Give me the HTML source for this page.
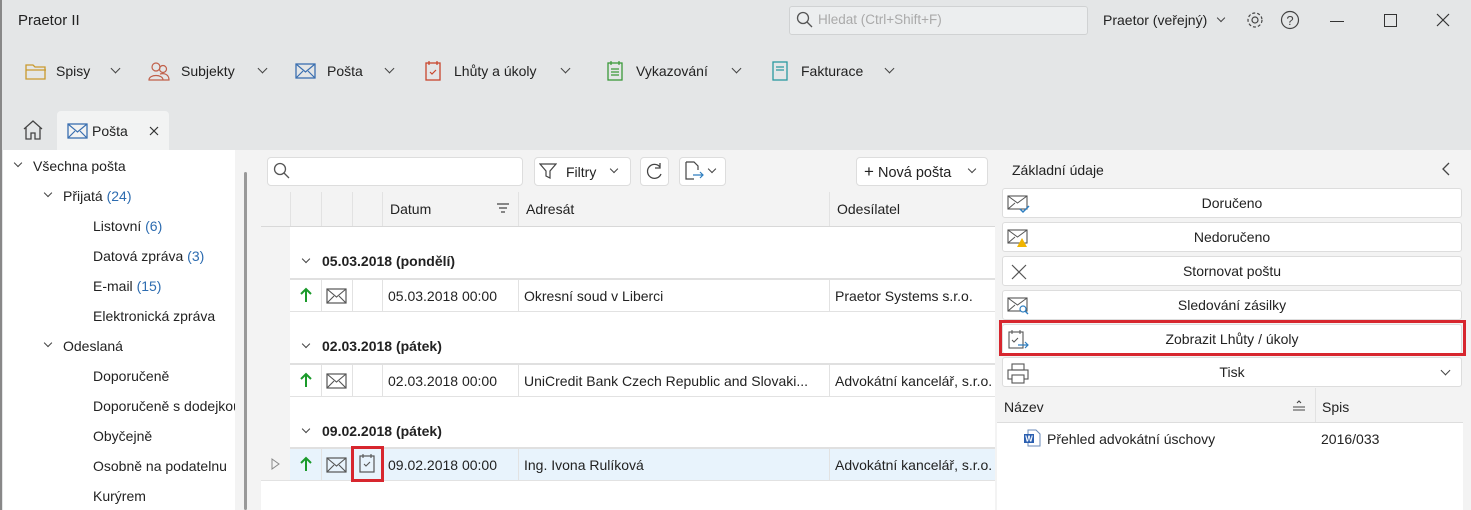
<!DOCTYPE html>
<html><head><meta charset="utf-8"><style>
*{box-sizing:border-box;margin:0;padding:0}
body{width:1471px;height:510px;overflow:hidden;background:#e4e6e7;font-family:"Liberation Sans",sans-serif;font-size:14px;color:#222;position:relative}
.a{position:absolute}
.t{position:absolute;white-space:nowrap}
.chev{display:inline-block;width:7px;height:7px;border-right:1.3px solid #444;border-bottom:1.3px solid #444;transform:rotate(45deg)}
.btn{position:absolute;background:#fff;border:1px solid #ddd;border-radius:4px}
.vl{position:absolute;width:1px;background:#e2e2e2}
.hl{position:absolute;height:1px;background:#e2e2e2}
.rb{position:absolute;left:1002px;width:460px;height:30px;background:#fff;border:1px solid #ddd;border-radius:3px;text-align:center;line-height:28px;font-size:14px}
.rb svg{position:absolute;left:4px;top:5px}
</style></head><body>
<div class="a" style="left:0;top:0;width:2px;height:510px;background:#888"></div>
<div class="t" style="left:18px;top:12px;font-size:15px">Praetor II</div>
<div class="a" style="left:789px;top:6px;width:299px;height:29px;background:#eceeef;border:1px solid #d0d2d3;border-radius:3px"></div>
<svg class="a" style="left:795px;top:11px" width="18" height="18"><circle cx="8" cy="7" r="5.5" fill="none" stroke="#555" stroke-width="1.3"/><path d="M12 11l5 5" stroke="#555" stroke-width="1.3"/></svg>
<div class="t" style="left:818px;top:12px;color:#aaa;font-size:13.5px">Hledat (Ctrl+Shift+F)</div>
<div class="t" style="left:1103px;top:12px;font-size:14px">Praetor (veřejný)</div>
<span class="a chev" style="left:1218px;top:15px;width:6px;height:6px"></span>
<svg class="a" style="left:1245px;top:10px" width="20" height="20"><circle cx="10" cy="10" r="3" fill="none" stroke="#444" stroke-width="1.2"/><circle cx="10" cy="10" r="7" fill="none" stroke="#444" stroke-width="1.2" stroke-dasharray="3 2"/></svg>
<svg class="a" style="left:1280px;top:10px" width="20" height="20"><circle cx="10" cy="10" r="8.5" fill="none" stroke="#444" stroke-width="1.2"/><text x="10" y="15" text-anchor="middle" font-size="13" font-family="Liberation Sans" fill="#444">?</text></svg>
<div class="a" style="left:1330px;top:21px;width:14px;height:1px;background:#333"></div>
<div class="a" style="left:1384px;top:14px;width:13px;height:13px;border:1.2px solid #333"></div>
<svg class="a" style="left:1436px;top:13px" width="14" height="14"><path d="M1 1L13 13M13 1L1 13" stroke="#333" stroke-width="1.2"/></svg>

<!-- toolbar -->
<svg class="a" style="left:25px;top:62px" width="22" height="18"><path d="M1 3h7l2 2h10v12H1z" fill="none" stroke="#c99a2e" stroke-width="1.3"/><path d="M1 8h20" stroke="#c99a2e" stroke-width="1.2"/></svg>
<div class="t" style="left:56px;top:63px">Spisy</div><span class="a chev" style="left:112px;top:65px"></span>
<svg class="a" style="left:148px;top:60px" width="22" height="22"><circle cx="8" cy="7" r="4" fill="none" stroke="#c0604a" stroke-width="1.2"/><circle cx="15" cy="9" r="3.5" fill="none" stroke="#c0604a" stroke-width="1.2"/><path d="M1 20c0-6 14-6 14 0zM12 14c4-1 9 0 9 6h-6" fill="none" stroke="#c0604a" stroke-width="1.2"/></svg>
<div class="t" style="left:181px;top:63px">Subjekty</div><span class="a chev" style="left:259px;top:65px"></span>
<svg class="a" style="left:295px;top:63px" width="22" height="16"><rect x="1" y="1" width="19" height="14" fill="none" stroke="#3a6fb0" stroke-width="1.3"/><path d="M1 1l9.5 8L20 1M1 15l7-7M20 15l-7-7" fill="none" stroke="#3a6fb0" stroke-width="1.2"/></svg>
<div class="t" style="left:327px;top:63px">Pošta</div><span class="a chev" style="left:386px;top:65px"></span>
<svg class="a" style="left:424px;top:60px" width="18" height="22"><rect x="2" y="3" width="14" height="17" fill="none" stroke="#c8452c" stroke-width="1.3"/><path d="M5 1v4M13 1v4M6 12l2 2 4-4" fill="none" stroke="#c8452c" stroke-width="1.2"/></svg>
<div class="t" style="left:454px;top:63px">Lhůty a úkoly</div><span class="a chev" style="left:562px;top:65px"></span>
<svg class="a" style="left:606px;top:60px" width="18" height="22"><rect x="2" y="3" width="14" height="17" fill="none" stroke="#3a9a3a" stroke-width="1.3"/><path d="M5 1v4M13 1v4M5 9h8M5 12h8M5 15h8" stroke="#3a9a3a" stroke-width="1.2"/></svg>
<div class="t" style="left:636px;top:63px">Vykazování</div><span class="a chev" style="left:733px;top:65px"></span>
<svg class="a" style="left:772px;top:61px" width="16" height="20"><rect x="1" y="1" width="14" height="18" fill="none" stroke="#2a9aa0" stroke-width="1.3"/><path d="M4 6h8M4 9h8" stroke="#2a9aa0" stroke-width="1.2"/></svg>
<div class="t" style="left:801px;top:63px">Fakturace</div><span class="a chev" style="left:886px;top:65px"></span>

<!-- tabs -->
<svg class="a" style="left:22px;top:119px" width="22" height="22"><path d="M2 10L11 2l9 8M4 8v12h5v-6h4v6h5V8" fill="none" stroke="#444" stroke-width="1.3"/></svg>
<div class="a" style="left:57px;top:111px;width:112px;height:40px;background:#f2f3f3;border-radius:4px 4px 0 0"></div>
<svg class="a" style="left:67px;top:123px" width="22" height="16"><rect x="1" y="1" width="19" height="14" fill="none" stroke="#3a6fb0" stroke-width="1.3"/><path d="M1 1l9.5 8L20 1M1 15l7-7M20 15l-7-7" fill="none" stroke="#3a6fb0" stroke-width="1.2"/></svg>
<div class="t" style="left:92px;top:123px">Pošta</div>
<svg class="a" style="left:149px;top:126px" width="10" height="10"><path d="M1 1l8 8M9 1L1 9" stroke="#333" stroke-width="1.2"/></svg>

<!-- left tree -->
<div class="a" style="left:3px;top:150px;width:232px;height:360px;background:#fff"></div>
<div class="a" style="left:235px;top:150px;width:26px;height:360px;background:#f3f3f3"></div>
<div class="a" style="left:244px;top:172px;width:3px;height:338px;background:#999;border-radius:2px"></div>
<span class="a chev" style="left:15px;top:160px;width:6px;height:6px"></span><div class="t" style="left:33px;top:158px">Všechna pošta</div>
<span class="a chev" style="left:45px;top:190px;width:6px;height:6px"></span><div class="t" style="left:63px;top:188px">Přijatá <span style="color:#2d6cb0">(24)</span></div>
<div class="t" style="left:93px;top:218px">Listovní <span style="color:#2d6cb0">(6)</span></div>
<div class="t" style="left:93px;top:248px">Datová zpráva <span style="color:#2d6cb0">(3)</span></div>
<div class="t" style="left:93px;top:278px">E-mail <span style="color:#2d6cb0">(15)</span></div>
<div class="t" style="left:93px;top:308px">Elektronická zpráva</div>
<span class="a chev" style="left:45px;top:340px;width:6px;height:6px"></span><div class="t" style="left:63px;top:338px">Odeslaná</div>
<div class="t" style="left:93px;top:368px">Doporučeně</div>
<div class="t" style="left:93px;top:398px;width:142px;overflow:hidden">Doporučeně s dodejkou</div>
<div class="t" style="left:93px;top:428px">Obyčejně</div>
<div class="t" style="left:93px;top:458px;width:142px;overflow:hidden">Osobně na podatelnu</div>
<div class="t" style="left:93px;top:488px">Kurýrem</div>

<!-- middle -->
<div class="a" style="left:261px;top:150px;width:734px;height:360px;background:#f3f3f3"></div>
<div class="btn" style="left:267px;top:157px;width:256px;height:29px"></div>
<svg class="a" style="left:273px;top:162px" width="18" height="18"><circle cx="7" cy="7" r="5.5" fill="none" stroke="#555" stroke-width="1.3"/><path d="M11 11l5 5" stroke="#555" stroke-width="1.3"/></svg>
<div class="btn" style="left:534px;top:157px;width:97px;height:29px"></div>
<svg class="a" style="left:539px;top:162px" width="18" height="18"><path d="M1 2h16l-6 7v7l-4-2V9z" fill="none" stroke="#444" stroke-width="1.2"/></svg>
<div class="t" style="left:566px;top:164px">Filtry</div><span class="a chev" style="left:611px;top:166px;width:6px;height:6px"></span>
<div class="btn" style="left:640px;top:157px;width:29px;height:29px"></div>
<svg class="a" style="left:645px;top:162px" width="19" height="19"><path d="M15 5A7 7 0 1 0 16 12" fill="none" stroke="#444" stroke-width="1.3"/><path d="M15 1v5h-5" fill="none" stroke="#444" stroke-width="1.3"/></svg>
<div class="btn" style="left:679px;top:157px;width:47px;height:29px"></div>
<svg class="a" style="left:684px;top:161px" width="22" height="20"><path d="M2 1h8l4 4v4M2 1v17h8" fill="none" stroke="#444" stroke-width="1.2"/><path d="M9 14h10M16 11l3 3-3 3" fill="none" stroke="#2d7ec0" stroke-width="1.2"/></svg>
<span class="a chev" style="left:709px;top:166px;width:6px;height:6px"></span>
<div class="btn" style="left:856px;top:157px;width:132px;height:29px"></div>
<div class="t" style="left:864px;top:162px;font-size:14.5px"><span style="font-size:17px">+</span> Nová pošta</div><span class="a chev" style="left:969px;top:166px;width:6px;height:6px"></span>

<!-- grid -->
<div class="a" style="left:290px;top:192px;width:705px;height:34px;background:#f3f3f3"></div>
<div class="a" style="left:261px;top:226px;width:734px;height:1px;background:#d8d8d8"></div>
<div class="a" style="left:290px;top:227px;width:705px;height:283px;background:#fff"></div>
<div class="a" style="left:261px;top:480px;width:734px;height:30px;background:#fff"></div>
<div class="vl" style="left:290px;top:192px;height:34px"></div>
<div class="vl" style="left:321px;top:192px;height:34px"></div>
<div class="vl" style="left:352px;top:192px;height:34px"></div>
<div class="vl" style="left:382px;top:192px;height:34px"></div>
<div class="vl" style="left:518px;top:192px;height:34px"></div>
<div class="vl" style="left:829px;top:192px;height:34px"></div>
<div class="t" style="left:390px;top:201px">Datum</div>
<svg class="a" style="left:496px;top:203px" width="14" height="10"><path d="M1 1h12M3 5h8M5 9h4" stroke="#444" stroke-width="1.2"/></svg>
<div class="t" style="left:526px;top:201px">Adresát</div>
<div class="t" style="left:837px;top:201px">Odesílatel</div>

<!-- groups -->
<span class="a chev" style="left:303px;top:256px;width:6px;height:6px"></span><div class="t" style="left:322px;top:253px;font-weight:bold">05.03.2018 (pondělí)</div>
<div class="hl" style="left:290px;top:278px;width:705px;height:2px;background:#e0e0e0"></div>
<div class="hl" style="left:290px;top:311px;width:705px"></div>
<span class="a chev" style="left:303px;top:341px;width:6px;height:6px"></span><div class="t" style="left:322px;top:338px;font-weight:bold">02.03.2018 (pátek)</div>
<div class="hl" style="left:290px;top:363px;width:705px;height:2px;background:#e0e0e0"></div>
<div class="hl" style="left:290px;top:396px;width:705px"></div>
<span class="a chev" style="left:303px;top:426px;width:6px;height:6px"></span><div class="t" style="left:322px;top:423px;font-weight:bold">09.02.2018 (pátek)</div>
<div class="hl" style="left:290px;top:447px;width:705px;height:2px;background:#e0e0e0"></div>
<div class="a" style="left:290px;top:449px;width:705px;height:31px;background:#e8f3fc"></div>
<div class="hl" style="left:261px;top:480px;width:734px"></div>

<!-- row cells -->
<div class="vl" style="left:321px;top:280px;height:31px"></div><div class="vl" style="left:352px;top:280px;height:31px"></div><div class="vl" style="left:382px;top:280px;height:31px"></div><div class="vl" style="left:518px;top:280px;height:31px"></div><div class="vl" style="left:829px;top:280px;height:31px"></div>
<div class="vl" style="left:321px;top:365px;height:31px"></div><div class="vl" style="left:352px;top:365px;height:31px"></div><div class="vl" style="left:382px;top:365px;height:31px"></div><div class="vl" style="left:518px;top:365px;height:31px"></div><div class="vl" style="left:829px;top:365px;height:31px"></div>
<div class="vl" style="left:321px;top:449px;height:31px"></div><div class="vl" style="left:352px;top:449px;height:31px"></div><div class="vl" style="left:382px;top:449px;height:31px"></div><div class="vl" style="left:518px;top:449px;height:31px"></div><div class="vl" style="left:829px;top:449px;height:31px"></div>

<svg class="a" style="left:300px;top:287px" width="12" height="16"><path d="M6 15V2M1 7l5-5 5 5" fill="none" stroke="#1a9a2a" stroke-width="2"/></svg>
<svg class="a" style="left:326px;top:288px" width="22" height="16"><rect x="1" y="1" width="19" height="14" fill="none" stroke="#555" stroke-width="1.2"/><path d="M1 1l9.5 8L20 1M1 15l7-7M20 15l-7-7" fill="none" stroke="#555" stroke-width="1.1"/></svg>
<div class="t" style="left:388px;top:288px">05.03.2018 00:00</div>
<div class="t" style="left:524px;top:288px">Okresní soud v Liberci</div>
<div class="t" style="left:835px;top:288px">Praetor Systems s.r.o.</div>

<svg class="a" style="left:300px;top:372px" width="12" height="16"><path d="M6 15V2M1 7l5-5 5 5" fill="none" stroke="#1a9a2a" stroke-width="2"/></svg>
<svg class="a" style="left:326px;top:373px" width="22" height="16"><rect x="1" y="1" width="19" height="14" fill="none" stroke="#555" stroke-width="1.2"/><path d="M1 1l9.5 8L20 1M1 15l7-7M20 15l-7-7" fill="none" stroke="#555" stroke-width="1.1"/></svg>
<div class="t" style="left:388px;top:373px">02.03.2018 00:00</div>
<div class="t" style="left:524px;top:373px">UniCredit Bank Czech Republic and Slovaki...</div>
<div class="t" style="left:835px;top:373px;width:160px;overflow:hidden">Advokátní kancelář, s.r.o.</div>

<svg class="a" style="left:271px;top:458px" width="10" height="12"><path d="M1 1l7 5-7 5z" fill="none" stroke="#888" stroke-width="1"/></svg>
<svg class="a" style="left:300px;top:456px" width="12" height="16"><path d="M6 15V2M1 7l5-5 5 5" fill="none" stroke="#1a9a2a" stroke-width="2"/></svg>
<svg class="a" style="left:326px;top:457px" width="22" height="16"><rect x="1" y="1" width="19" height="14" fill="none" stroke="#555" stroke-width="1.2"/><path d="M1 1l9.5 8L20 1M1 15l7-7M20 15l-7-7" fill="none" stroke="#555" stroke-width="1.1"/></svg>
<div class="a" style="left:351px;top:446px;width:33px;height:36px;border:3px solid #d7262e"></div>
<svg class="a" style="left:358px;top:453px" width="18" height="22"><rect x="2" y="3" width="14" height="16" fill="none" stroke="#555" stroke-width="1.2"/><path d="M5 1v4M13 1v4M6 11l2 2 4-4" fill="none" stroke="#555" stroke-width="1.1"/></svg>
<div class="t" style="left:388px;top:457px">09.02.2018 00:00</div>
<div class="t" style="left:524px;top:457px">Ing. Ivona Rulíková</div>
<div class="t" style="left:835px;top:457px;width:160px;overflow:hidden">Advokátní kancelář, s.r.o.</div>

<!-- right panel -->
<div class="a" style="left:995px;top:150px;width:476px;height:360px;background:#f3f3f3"></div>
<div class="t" style="left:1012px;top:162px">Základní údaje</div>
<svg class="a" style="left:1441px;top:162px" width="10" height="14"><path d="M8 1L2 7l6 6" fill="none" stroke="#444" stroke-width="1.3"/></svg>
<div class="rb" style="top:188px"><svg width="24" height="20"><rect x="1" y="2" width="19" height="13" fill="none" stroke="#555" stroke-width="1.1"/><path d="M1 2l9.5 7L20 2M1 15l7-6" fill="none" stroke="#555" stroke-width="1"/><path d="M13 15l3 3 6-6" fill="none" stroke="#2d7ec0" stroke-width="1.5"/></svg>Doručeno</div>
<div class="rb" style="top:222px"><svg width="24" height="20"><rect x="1" y="2" width="19" height="13" fill="none" stroke="#555" stroke-width="1.1"/><path d="M1 2l9.5 7L20 2M1 15l7-6" fill="none" stroke="#555" stroke-width="1"/><path d="M15 10l5 9h-10z" fill="#f0b400"/></svg>Nedoručeno</div>
<div class="rb" style="top:256px"><svg width="24" height="20"><path d="M5 3l14 14M19 3L5 17" stroke="#555" stroke-width="1.2"/></svg>Stornovat poštu</div>
<div class="rb" style="top:290px"><svg width="24" height="20"><rect x="1" y="2" width="19" height="13" fill="none" stroke="#555" stroke-width="1.1"/><path d="M1 2l9.5 7L20 2M1 15l7-6" fill="none" stroke="#555" stroke-width="1"/><circle cx="16" cy="13" r="3" fill="#fff" stroke="#2d7ec0" stroke-width="1.2"/><path d="M18 15l3 3" stroke="#2d7ec0" stroke-width="1.3"/></svg>Sledování zásilky</div>
<div class="rb" style="top:324px"><svg width="24" height="20"><rect x="2" y="2" width="14" height="16" fill="none" stroke="#555" stroke-width="1.1"/><path d="M5 0v4M13 0v4M5 10l2 2 4-4" fill="none" stroke="#555" stroke-width="1"/><path d="M11 15h10M18 12l3 3-3 3" fill="none" stroke="#2d7ec0" stroke-width="1.2"/></svg>Zobrazit Lhůty / úkoly</div>
<div class="a" style="left:999px;top:320px;width:467px;height:36px;border:3px solid #d7262e"></div>
<div class="rb" style="top:357px"><svg width="24" height="22"><rect x="5" y="1" width="12" height="6" fill="none" stroke="#555" stroke-width="1.1"/><rect x="1" y="7" width="20" height="9" fill="none" stroke="#555" stroke-width="1.1"/><rect x="5" y="12" width="12" height="8" fill="#fff" stroke="#555" stroke-width="1.1"/></svg>Tisk<span class="chev" style="position:absolute;right:12px;top:9px;width:7px;height:7px"></span></div>
<div class="t" style="left:1004px;top:399px">Název</div>
<svg class="a" style="left:1292px;top:400px" width="14" height="12"><path d="M5 3l2-2 2 2M1 7h12M1 10h12" fill="none" stroke="#444" stroke-width="1.1"/></svg>
<div class="vl" style="left:1315px;top:388px;height:34px"></div>
<div class="t" style="left:1322px;top:399px">Spis</div>
<div class="a" style="left:997px;top:422px;width:466px;height:88px;background:#fff;border-top:1px solid #ddd"></div>
<svg class="a" style="left:1023px;top:429px" width="18" height="18"><path d="M5 1h8l4 4v12H5z" fill="#fff" stroke="#6a8ab8" stroke-width="1"/><rect x="1" y="5" width="10" height="9" fill="#2b5fb0"/><text x="6" y="12.5" text-anchor="middle" font-size="8" fill="#fff" font-family="Liberation Sans" font-weight="bold">W</text></svg>
<div class="t" style="left:1047px;top:431px">Přehled advokátní úschovy</div>
<div class="t" style="left:1321px;top:431px">2016/033</div>
</body></html>
